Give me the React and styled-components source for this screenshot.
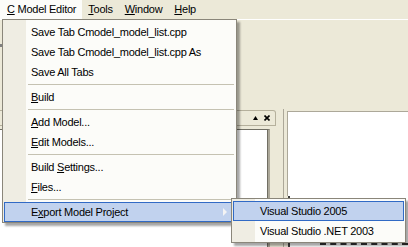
import styled, { createGlobalStyle } from 'styled-components';

const GlobalStyle = createGlobalStyle`
  html, body { margin:0; padding:0; }
  body { background:#ECE9D8; font-family:"Liberation Sans", Arial, sans-serif; }
`;

const Screen = styled.div`
  position:relative;
  width:408px;
  height:247px;
  overflow:hidden;
  background:#ECE9D8;
  display:flex;
  flex-direction:column;
  font-family:"Liberation Sans", Arial, sans-serif;
  font-size:11px;
  letter-spacing:-0.25px;
  color:#000;
`;

const MenuBar = styled.div`
  display:flex;
  height:19px;
  flex-shrink:0;
  border-bottom:1px solid #fff;
`;

const MenuTitle = styled.div`
  padding:0 6px 0 ${p => (p.$first ? '7px' : '6px')};
  line-height:19px;
  background:${p => (p.$open ? '#FCFCF9' : 'transparent')};
`;

const Key = styled.span`
  text-decoration:underline;
  text-underline-offset:1px;
`;

const ToolArea = styled.div`
  height:89px;
  flex-shrink:0;
  padding-top:24px;
  box-sizing:border-box;
`;

const Grip = styled.div`
  width:2px;
  height:3px;
  background:#808080;
`;

const DockRow = styled.div`
  flex:1;
  display:flex;
  min-height:0;
`;

const LeftDock = styled.div`
  width:276px;
  display:flex;
  flex-direction:column;
`;

const DockHeader = styled.div`
  height:14px;
  margin-top:1px;
  border:1px solid #B5B09C;
  border-left:none;
  border-radius:0 3px 0 0;
  display:flex;
  justify-content:flex-end;
  align-items:center;
  gap:6px;
  padding-right:5px;
`;

const DockBody = styled.div`
  flex:1;
  margin:3px 6px 0 0;
  background:#fff;
  border-top:1px solid #716F64;
  border-right:2px solid #ACA899;
  box-shadow:inset -1px 0 0 #716F64;
`;

const Splitter = styled.div`
  width:7px;
`;

const RightPane = styled.div`
  flex:1;
  display:flex;
  flex-direction:column;
  border-left:1px solid #ACA899;
  padding:2px 0 0 3px;
`;

const Editor = styled.div`
  flex:1;
  background:#fff;
  border-top:1px solid #ACA899;
  border-left:1px solid #ACA899;
`;

const Output = styled.div`
  height:49px;
  background:#fff;
  border-left:2px solid #404040;
  margin-left:1px;
  display:flex;
  align-items:flex-end;
  padding:0 0 2px 30px;
`;

const OutputLine = styled.div`
  flex:1;
  border-bottom:2px dashed #333;
`;

const Dropdown = styled.div`
  position:absolute;
  left:${p => p.$left}px;
  top:${p => p.$top}px;
  width:${p => p.$width}px;
  box-sizing:border-box;
  border:1px solid #8A867A;
  padding:2px 0 ${p => p.$bottom}px;
  background:linear-gradient(to right, #EFEDE3 0 23px, #FCFCF9 23px);
  box-shadow:3px 3px 2px rgba(0,0,0,0.35);
  z-index:2;
`;

const Item = styled.div`
  position:relative;
  height:20px;
  box-sizing:border-box;
  margin:0 1px;
  padding-left:26px;
  line-height:18px;
  white-space:nowrap;
  border:1px solid ${p => (p.$active ? '#316AC5' : 'transparent')};
  background:${p => (p.$active ? '#C1D2EE' : 'transparent')};
`;

const Arrow = styled.span`
  position:absolute;
  right:7px;
  top:5px;
  width:0;
  height:0;
  border-left:4px solid #F4F4F4;
  border-top:4px solid transparent;
  border-bottom:4px solid transparent;
`;

const Separator = styled.div`
  height:5px;
  margin:0 2px 0 25px;
  display:flex;
  align-items:center;
  &::after {
    content:'';
    flex:1;
    height:1px;
    background:#C5C2B2;
  }
`;

const UpIcon = () => (
  <svg width="5" height="4" viewBox="0 0 5 4">
    <path d="M2.5 0 L5 4 L0 4 Z" fill="#000" />
  </svg>
);

const CloseIcon = () => (
  <svg width="6" height="6" viewBox="0 0 6 6">
    <path d="M0.5 0.5 L5.5 5.5 M5.5 0.5 L0.5 5.5" stroke="#000" strokeWidth="1.6" />
  </svg>
);

export default function App() {
  return (
    <>
      <GlobalStyle />
      <Screen>
        <MenuBar>
          <MenuTitle $first $open><Key>C</Key> Model Editor</MenuTitle>
          <MenuTitle><Key>T</Key>ools</MenuTitle>
          <MenuTitle><Key>W</Key>indow</MenuTitle>
          <MenuTitle><Key>H</Key>elp</MenuTitle>
        </MenuBar>
        <ToolArea>
          <Grip />
        </ToolArea>
        <DockRow>
          <LeftDock>
            <DockHeader>
              <UpIcon />
              <CloseIcon />
            </DockHeader>
            <DockBody />
          </LeftDock>
          <Splitter />
          <RightPane>
            <Editor />
            <Output>
              <OutputLine />
            </Output>
          </RightPane>
        </DockRow>

        <Dropdown $left={2} $top={19} $width={235} $bottom={0}>
          <Item>Save Tab Cmodel_model_list.cpp</Item>
          <Item>Save Tab Cmodel_model_list.cpp As</Item>
          <Item>Save All Tabs</Item>
          <Separator />
          <Item><Key>B</Key>uild</Item>
          <Separator />
          <Item><Key>A</Key>dd Model...</Item>
          <Item><Key>E</Key>dit Models...</Item>
          <Separator />
          <Item>Build <Key>S</Key>ettings...</Item>
          <Item><Key>F</Key>iles...</Item>
          <Separator />
          <Item $active>E<Key>x</Key>port Model Project<Arrow /></Item>
        </Dropdown>

        <Dropdown $left={231} $top={198} $width={175} $bottom={1}>
          <Item $active>Visual Studio 2005</Item>
          <Item>Visual Studio .NET 2003</Item>
        </Dropdown>
      </Screen>
    </>
  );
}
